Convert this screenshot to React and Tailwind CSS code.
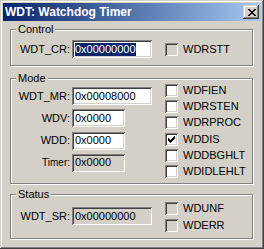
import React from 'react'

// sunken 3D edge used by edit boxes and check boxes
const sunken =
  'shadow-[inset_1px_1px_#808080,inset_-1px_-1px_#ffffff,inset_2px_2px_#404040,inset_-2px_-2px_#d4d0c8]'

const CheckMark = () => (
  <svg width="7" height="7" viewBox="0 0 7 7" shapeRendering="crispEdges">
    <path
      fill="#000"
      d="M6 0h1v1h-1z M5 1h2v1h-2z M0 2h1v1h-1z M4 2h3v1h-3z M0 3h2v1h-2z M3 3h3v1h-3z M0 4h5v1h-5z M1 5h3v1h-3z M2 6h1v1h-1z"
    />
  </svg>
)

const CloseGlyph = () => (
  <svg width="8" height="7" viewBox="0 0 8 7" shapeRendering="crispEdges">
    <path
      fill="#000"
      d="M0 0h2v1h-2z M6 0h2v1h-2z M1 1h2v1h-2z M5 1h2v1h-2z M2 2h4v1h-4z M3 3h2v1h-2z M2 4h4v1h-4z M1 5h2v1h-2z M5 5h2v1h-2z M0 6h2v1h-2z M6 6h2v1h-2z"
    />
  </svg>
)

const Check = ({ label, checked, disabled }) => (
  <div className="flex items-center h-[13px]">
    <span
      className={`flex items-center justify-center w-[13px] h-[13px] shrink-0 ${sunken} ${
        disabled ? 'bg-[#d4d0c8]' : 'bg-white'
      }`}
    >
      {checked && <CheckMark />}
    </span>
    <span className="ml-[5px] leading-[13px]">{label}</span>
  </div>
)

const Edit = ({ value, width = 'w-[80px]', disabled, selected }) => (
  <div
    className={`flex items-center h-[18px] pl-[3px] shrink-0 ${width} ${sunken} ${
      disabled ? 'bg-[#d4d0c8]' : 'bg-white'
    }`}
  >
    {selected ? (
      <span className="bg-[#0a246a] text-white leading-[13px]">{value}</span>
    ) : (
      <span className="leading-[13px]">{value}</span>
    )}
  </div>
)

const Field = ({ label, labelClass = '', children }) => (
  <div className="flex items-center h-[18px]">
    <span className={`w-[59px] text-right mr-[2px] shrink-0 ${labelClass}`}>{label}</span>
    {children}
  </div>
)

const Group = ({ title, className = '', children }) => (
  <div
    className={`relative ml-[7px] w-[243px] border border-[#808080] shadow-[inset_1px_1px_#ffffff,1px_1px_#ffffff] ${className}`}
  >
    <span className="absolute -top-[6px] left-[5px] px-[2px] bg-[#d4d0c8] leading-[11px]">
      {title}
    </span>
    {children}
  </div>
)

export default function App() {
  return (
    <div
      className="w-[264px] h-[249px] p-[3px] bg-[#d4d0c8] text-black text-[11px] shadow-[inset_-1px_-1px_#404040,inset_1px_1px_#d4d0c8,inset_-2px_-2px_#808080,inset_2px_2px_#ffffff]"
      style={{ fontFamily: '"Liberation Sans", Arial, sans-serif' }}
    >
      {/* title bar */}
      <div className="flex items-center justify-between h-[18px] pl-[2px] pr-[2px] bg-gradient-to-r from-[#0a246a] to-[#a6caf0]">
        <span className="text-white font-bold text-[12px] leading-[14px]">WDT: Watchdog Timer</span>
        <button className="flex items-center justify-center w-[16px] h-[14px] pl-[1px] bg-[#d4d0c8] shadow-[inset_-1px_-1px_#404040,inset_1px_1px_#d4d0c8,inset_-2px_-2px_#808080,inset_2px_2px_#ffffff]">
          <CloseGlyph />
        </button>
      </div>

      <Group title="Control" className="mt-[8px] pt-[10px] pb-[7px]">
        <div className="flex items-center">
          <div className="w-[154px] shrink-0">
            <Field label="WDT_CR:">
              <Edit value="0x00000000" selected />
            </Field>
          </div>
          <Check label="WDRSTT" disabled />
        </div>
      </Group>

      <Group title="Mode" className="mt-[12px] pt-[5px] pb-[5px]">
        <div className="flex items-start">
          <div className="w-[154px] shrink-0 pt-[3px] flex flex-col justify-between h-[88px]">
            <Field label="WDT_MR:">
              <Edit value="0x00008000" />
            </Field>
            <Field label="WDV:">
              <Edit value="0x0000" width="w-[53px]" />
            </Field>
            <Field label="WDD:">
              <Edit value="0x0000" width="w-[53px]" />
            </Field>
            <Field label="Timer:" labelClass="text-[10px]">
              <Edit value="0x0000" width="w-[53px]" disabled />
            </Field>
          </div>
          <div className="flex flex-col justify-between h-[94px]">
            <Check label="WDFIEN" />
            <Check label="WDRSTEN" />
            <Check label="WDRPROC" />
            <Check label="WDDIS" checked />
            <Check label="WDDBGHLT" />
            <Check label="WDIDLEHLT" />
          </div>
        </div>
      </Group>

      <Group title="Status" className="mt-[10px] pt-[7px] pb-[6px]">
        <div className="flex items-start">
          <div className="w-[154px] shrink-0 pt-[5px]">
            <Field label="WDT_SR:">
              <Edit value="0x00000000" disabled />
            </Field>
          </div>
          <div className="flex flex-col gap-[4px]">
            <Check label="WDUNF" disabled />
            <Check label="WDERR" disabled />
          </div>
        </div>
      </Group>
    </div>
  )
}
